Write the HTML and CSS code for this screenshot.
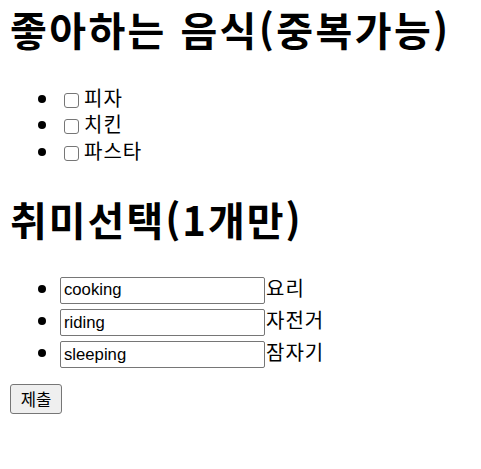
FILE: index.html
```html
<!DOCTYPE html>
<html lang="ko">
<head>
<meta charset="utf-8">
<title>취미</title>
<link rel="stylesheet" href="styles.css">
</head>
<body>
<form class="form">
  <h1 class="title title-wide">좋아하는 음식(중복가능)</h1>
  <ul class="list list-check">
    <li class="item"><input class="check" type="checkbox" name="food" value="pizza">피자</li>
    <li class="item"><input class="check" type="checkbox" name="food" value="chicken">치킨</li>
    <li class="item"><input class="check" type="checkbox" name="food" value="pasta">파스타</li>
  </ul>
  <h1 class="title">취미선택(1개만)</h1>
  <ul class="list list-text">
    <li class="item"><input class="field" type="text" value="cooking">요리</li>
    <li class="item"><input class="field" type="text" value="riding">자전거</li>
    <li class="item"><input class="field" type="text" value="sleeping">잠자기</li>
  </ul>
  <button class="submit" type="submit">제출</button>
</form>
</body>
</html>
```

FILE: styles.css
```css
html, body {
  margin: 0;
  padding: 0;
  background: #fff;
}

body {
  padding: 1px 10px 0;
  color: #000;
  font-family: "Noto Sans CJK KR", "Noto Sans", sans-serif;
  font-size: 20px;
}

.form {
  margin: 0;
}

.title {
  margin: 0;
  font-size: 40px;
  line-height: 57px;
  font-weight: bold;
  letter-spacing: 2px;
}

.title-wide {
  letter-spacing: 2.4px;
}

.list {
  margin: 26.8px 0;
  padding-left: 50px;
  list-style: disc;
}

.item {
  letter-spacing: 1px;
}

.list-check .item {
  line-height: 26.6px;
}

.list-text {
  margin-top: 23.5px;
  margin-bottom: 16px;
}

.list-text .item {
  line-height: 31px;
}

.check {
  appearance: none;
  width: 15px;
  height: 15px;
  margin: 0 5px 0 4px;
  border: 1px solid #767676;
  border-radius: 3px;
  background: #fff;
  vertical-align: -2px;
  box-sizing: border-box;
}

.field {
  box-sizing: border-box;
  width: 205px;
  height: 27px;
  margin: 0 1px 0 0;
  padding: 0 3px;
  border: 1px solid #767676;
  border-radius: 2px;
  background: #fff;
  color: #000;
  font-family: "Liberation Sans", Arial, sans-serif;
  font-size: 16.7px;
  letter-spacing: normal;
  vertical-align: middle;
}

.submit {
  display: block;
  box-sizing: border-box;
  width: 52px;
  height: 30px;
  margin: 0;
  padding: 0;
  border: 1px solid #767676;
  border-radius: 3px;
  background: #efefef;
  color: #000;
  font-family: "Noto Sans CJK KR", sans-serif;
  font-size: 16.7px;
  letter-spacing: normal;
  line-height: 1;
}
```
